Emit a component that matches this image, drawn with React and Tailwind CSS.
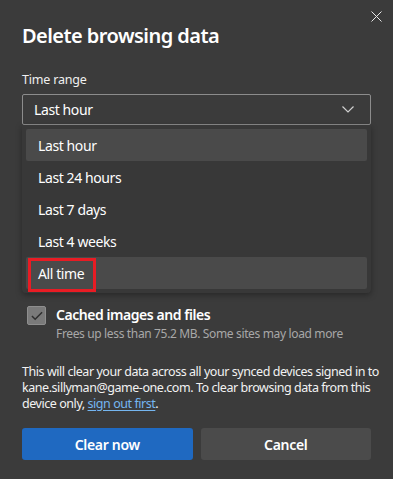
import React from 'react';

const options = ['Last hour', 'Last 24 hours', 'Last 7 days', 'Last 4 weeks', 'All time'];

export default function App() {
  return (
    <div className="relative w-[393px] h-[479px] bg-[#3b3b3b] px-[22px] text-white overflow-hidden font-['Noto_Sans',sans-serif]">
      {/* close */}
      <button className="absolute right-[11px] top-[11px] w-[11px] h-[11px]">
        <svg viewBox="0 0 11 11" className="w-[11px] h-[11px]">
          <path d="M0.5 0.5 L10.5 10.5 M10.5 0.5 L0.5 10.5" stroke="#e8e8e8" strokeWidth="1" />
        </svg>
      </button>

      <h1 className="pt-[22px] text-[20px] leading-[28px] font-semibold tracking-[-0.55px]">Delete browsing data</h1>

      <div className="mt-[21px] text-[12.5px] leading-[18px] tracking-[-0.2px] text-[#f0f0f0]">Time range</div>

      {/* select */}
      <div className="relative mt-[5px]">
        <div className="h-[31px] border border-[#8c8c8c] rounded-[2px] flex items-center justify-between pl-[11px] pr-[16px] text-[14px] tracking-[-0.4px]">
          <span>Last hour</span>
          <svg viewBox="0 0 12 7" className="w-[12px] h-[7px]">
            <path d="M0.5 0.5 L6 6 L11.5 0.5" fill="none" stroke="#d0d0d0" strokeWidth="1.2" />
          </svg>
        </div>

        {/* dropdown menu */}
        <div className="absolute left-0 right-0 top-[31px] z-10 bg-[#383838] rounded-b-[4px] px-[4px] py-[4px] shadow-[0_2px_6px_rgba(0,0,0,0.35)]">
          {options.map((o, i) => (
            <div
              key={o}
              className={
                'relative h-[32px] flex items-center pl-[12px] text-[14px] tracking-[-0.4px] rounded-[2px] ' +
                (i === 0 || i === 4 ? 'bg-[#4a4a4a]' : '')
              }
            >
              {o}
              {i === 4 && (
                <div className="absolute left-[2px] top-[1px] w-[68px] h-[34px] border-[3px] border-[#e81c24]" />
              )}
            </div>
          ))}
        </div>
      </div>

      {/* checkbox row */}
      <div className="mt-[180px] flex gap-[10px] pl-[5px]">
        <div className="mt-[1px] w-[19px] h-[19px] shrink-0 rounded-[2px] bg-[#7a7a7a] border border-[#8e8e8e] flex items-center justify-center">
          <svg viewBox="0 0 13 10" className="w-[12px] h-[10px]">
            <path d="M1 5 L4.5 8.5 L12 1" fill="none" stroke="#2e2e2e" strokeWidth="1.6" />
          </svg>
        </div>
        <div>
          <div className="text-[14px] leading-[20px] font-semibold tracking-[-0.45px]">Cached images and files</div>
          <div className="text-[12px] leading-[17px] tracking-[-0.35px] text-[#a8a8a8]">Frees up less than 75.2 MB. Some sites may load more</div>
        </div>
      </div>

      <p className="mt-[22px] whitespace-nowrap text-[12.5px] leading-[16px] tracking-[-0.45px] text-[#f2f2f2]">
        This will clear your data across all your synced devices signed in to
        <br />
        kane.sillyman@game-one.com. To clear browsing data from this
        <br />
        device only, <a className="text-[#75b6f0] underline underline-offset-2">sign out first</a>.
      </p>

      <div className="mt-[16px] flex gap-[8px]">
        <button className="flex-1 h-[32px] rounded-[3px] bg-[#1f69c1] text-[14px] font-semibold tracking-[-0.3px]">Clear now</button>
        <button className="flex-1 h-[32px] rounded-[3px] bg-[#4b4b4b] text-[14px] font-semibold tracking-[-0.3px]">Cancel</button>
      </div>
    </div>
  );
}
